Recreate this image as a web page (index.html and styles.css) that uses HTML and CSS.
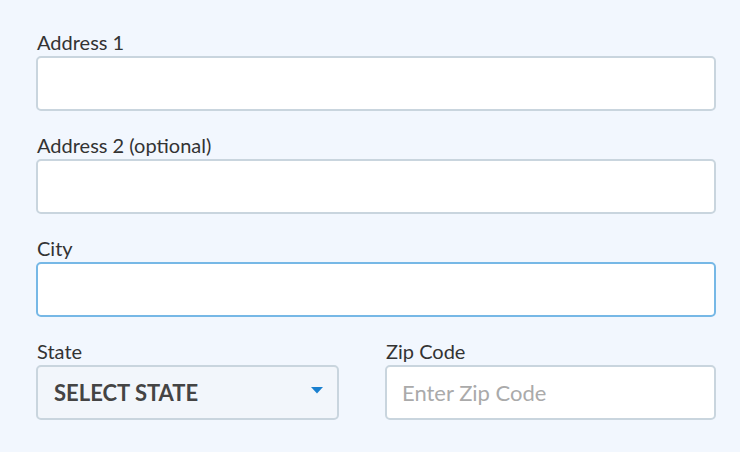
FILE: index.html
```html
<!DOCTYPE html>
<html>
<head>
<meta charset="utf-8">
<link rel="stylesheet" href="styles.css">
</head>
<body>
<form class="form">
  <div class="field">
    <label class="label">Address 1</label>
    <div class="input"></div>
  </div>
  <div class="field">
    <label class="label">Address 2 (optional)</label>
    <div class="input"></div>
  </div>
  <div class="field">
    <label class="label">City</label>
    <div class="input focused"></div>
  </div>
  <div class="row">
    <div class="field state">
      <label class="label">State</label>
      <div class="input select">
        <span class="select-text">SELECT STATE</span>
        <svg class="caret" width="12" height="7" viewBox="0 0 12 7"><path d="M0 0 H12 L6 6.5 Z" fill="#1a80cf"/></svg>
      </div>
    </div>
    <div class="field zip">
      <label class="label">Zip Code</label>
      <div class="input"><span class="placeholder">Enter Zip Code</span></div>
    </div>
  </div>
</form>
</body>
</html>
```
FILE: styles.css
```css
html, body {
  margin: 0;
  padding: 0;
  background: #f2f7fe;
  font-family: Lato, "Open Sans", sans-serif;
}
.form {
  padding: 30px 24px 0 36px;
  display: flex;
  flex-direction: column;
  gap: 22px;
}
.field {
  display: flex;
  flex-direction: column;
}
.label {
  font-size: 20px;
  line-height: 24px;
  color: #333;
  margin-bottom: 2px;
  padding-left: 1px;
}
.input {
  box-sizing: border-box;
  height: 55px;
  background: #fff;
  border: 2px solid #c9d5de;
  border-radius: 5px;
  display: flex;
  align-items: center;
  padding: 0 15px;
}
.focused {
  border-color: #76b8e6;
}
.row {
  display: flex;
  gap: 46px;
}
.state {
  width: 303px;
}
.zip {
  flex: 1;
}
.select {
  background: #f2f6fb;
  justify-content: space-between;
  padding: 0 14px 0 16px;
}
.select-text {
  font-size: 22px;
  font-weight: 700;
  color: #444;
}
.caret {
  display: block;
  margin-top: -4px;
}
.placeholder {
  font-size: 22px;
  color: #aaa;
}
```
